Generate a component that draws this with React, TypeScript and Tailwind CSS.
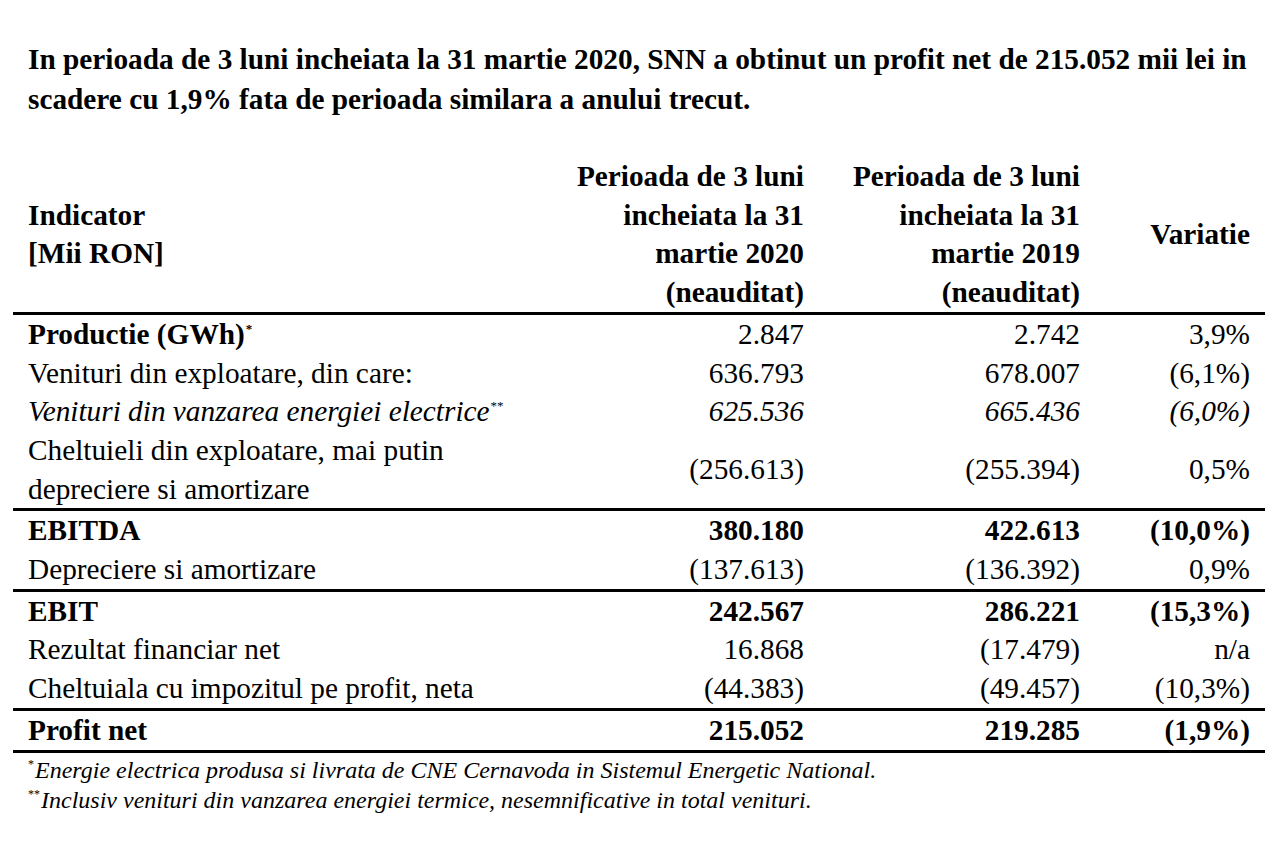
import React from "react";

const cols = "grid grid-cols-[547px_259px_276px_170px]";

const Star = ({ s }: { s: string }) => (
  <span className="text-[13px] leading-none not-italic relative -top-[11px] ml-[1px]">{s}</span>
);

type Row = {
  label: React.ReactNode;
  a: string;
  b: string;
  c: string;
  bold?: boolean;
  boldLabel?: boolean;
  italic?: boolean;
  topBorder?: boolean;
};

const rows: Row[] = [
  { label: <>Productie (GWh)<Star s="*" /></>, a: "2.847", b: "2.742", c: "3,9%", boldLabel: true, topBorder: true },
  { label: "Venituri din exploatare, din care:", a: "636.793", b: "678.007", c: "(6,1%)" },
  { label: <>Venituri din vanzarea energiei electrice<Star s="**" /></>, a: "625.536", b: "665.436", c: "(6,0%)", italic: true },
  { label: <>Cheltuieli din exploatare, mai putin<br />depreciere si amortizare</>, a: "(256.613)", b: "(255.394)", c: "0,5%" },
  { label: "EBITDA", a: "380.180", b: "422.613", c: "(10,0%)", bold: true, topBorder: true },
  { label: "Depreciere si amortizare", a: "(137.613)", b: "(136.392)", c: "0,9%" },
  { label: "EBIT", a: "242.567", b: "286.221", c: "(15,3%)", bold: true, topBorder: true },
  { label: "Rezultat financiar net", a: "16.868", b: "(17.479)", c: "n/a" },
  { label: "Cheltuiala cu impozitul pe profit, neta", a: "(44.383)", b: "(49.457)", c: "(10,3%)" },
  { label: "Profit net", a: "215.052", b: "219.285", c: "(1,9%)", bold: true, topBorder: true },
];

export default function App() {
  return (
    <div
      className="w-[1274px] h-[846px] bg-white text-black overflow-hidden"
      style={{ fontFamily: '"Liberation Serif", "Times New Roman", serif' }}
    >
      <div className="pt-[39px] px-[28px] text-[29.3px] font-bold leading-[40px] whitespace-nowrap">
        In perioada de 3 luni incheiata la 31 martie 2020, SNN a obtinut un profit net de 215.052 mii lei in
        <br />
        scadere cu 1,9% fata de perioada similara a anului trecut.
      </div>

      <div className="ml-[13px] w-[1252px] mt-[38px] text-[29.3px] leading-[38.7px] whitespace-nowrap">
        <div className={`${cols} font-bold`}>
          <div className="px-[15px] flex flex-col justify-center">
            <div>Indicator</div>
            <div>[Mii RON]</div>
          </div>
          <div className="px-[15px] text-right">
            Perioada de 3 luni
            <br />
            incheiata la 31
            <br />
            martie 2020
            <br />
            (neauditat)
          </div>
          <div className="px-[15px] text-right">
            Perioada de 3 luni
            <br />
            incheiata la 31
            <br />
            martie 2019
            <br />
            (neauditat)
          </div>
          <div className="px-[15px] text-right flex flex-col justify-center">Variatie</div>
        </div>

        {rows.map((r, i) => (
          <div
            key={i}
            className={`${cols} ${r.topBorder ? "border-t-[3px] border-black" : ""} ${r.bold ? "font-bold" : ""} ${r.italic ? "italic" : ""}`}
          >
            <div className={`px-[15px] ${r.boldLabel ? "font-bold" : ""}`}>{r.label}</div>
            <div className="px-[15px] text-right flex flex-col justify-center">{r.a}</div>
            <div className="px-[15px] text-right flex flex-col justify-center">{r.b}</div>
            <div className="px-[15px] text-right flex flex-col justify-center">{r.c}</div>
          </div>
        ))}
        <div className="border-t-[3px] border-black" />
      </div>

      <div className="px-[28px] pt-[2px] text-[24px] italic leading-[30px] whitespace-nowrap">
        <div>
          <span className="text-[12px] leading-none not-italic relative -top-[10px] mr-[1px]">*</span>Energie electrica produsa si livrata de CNE Cernavoda in Sistemul Energetic National.
        </div>
        <div>
          <span className="text-[12px] leading-none not-italic relative -top-[10px] mr-[1px]">**</span>Inclusiv venituri din vanzarea energiei termice, nesemnificative in total venituri.
        </div>
      </div>
    </div>
  );
}
